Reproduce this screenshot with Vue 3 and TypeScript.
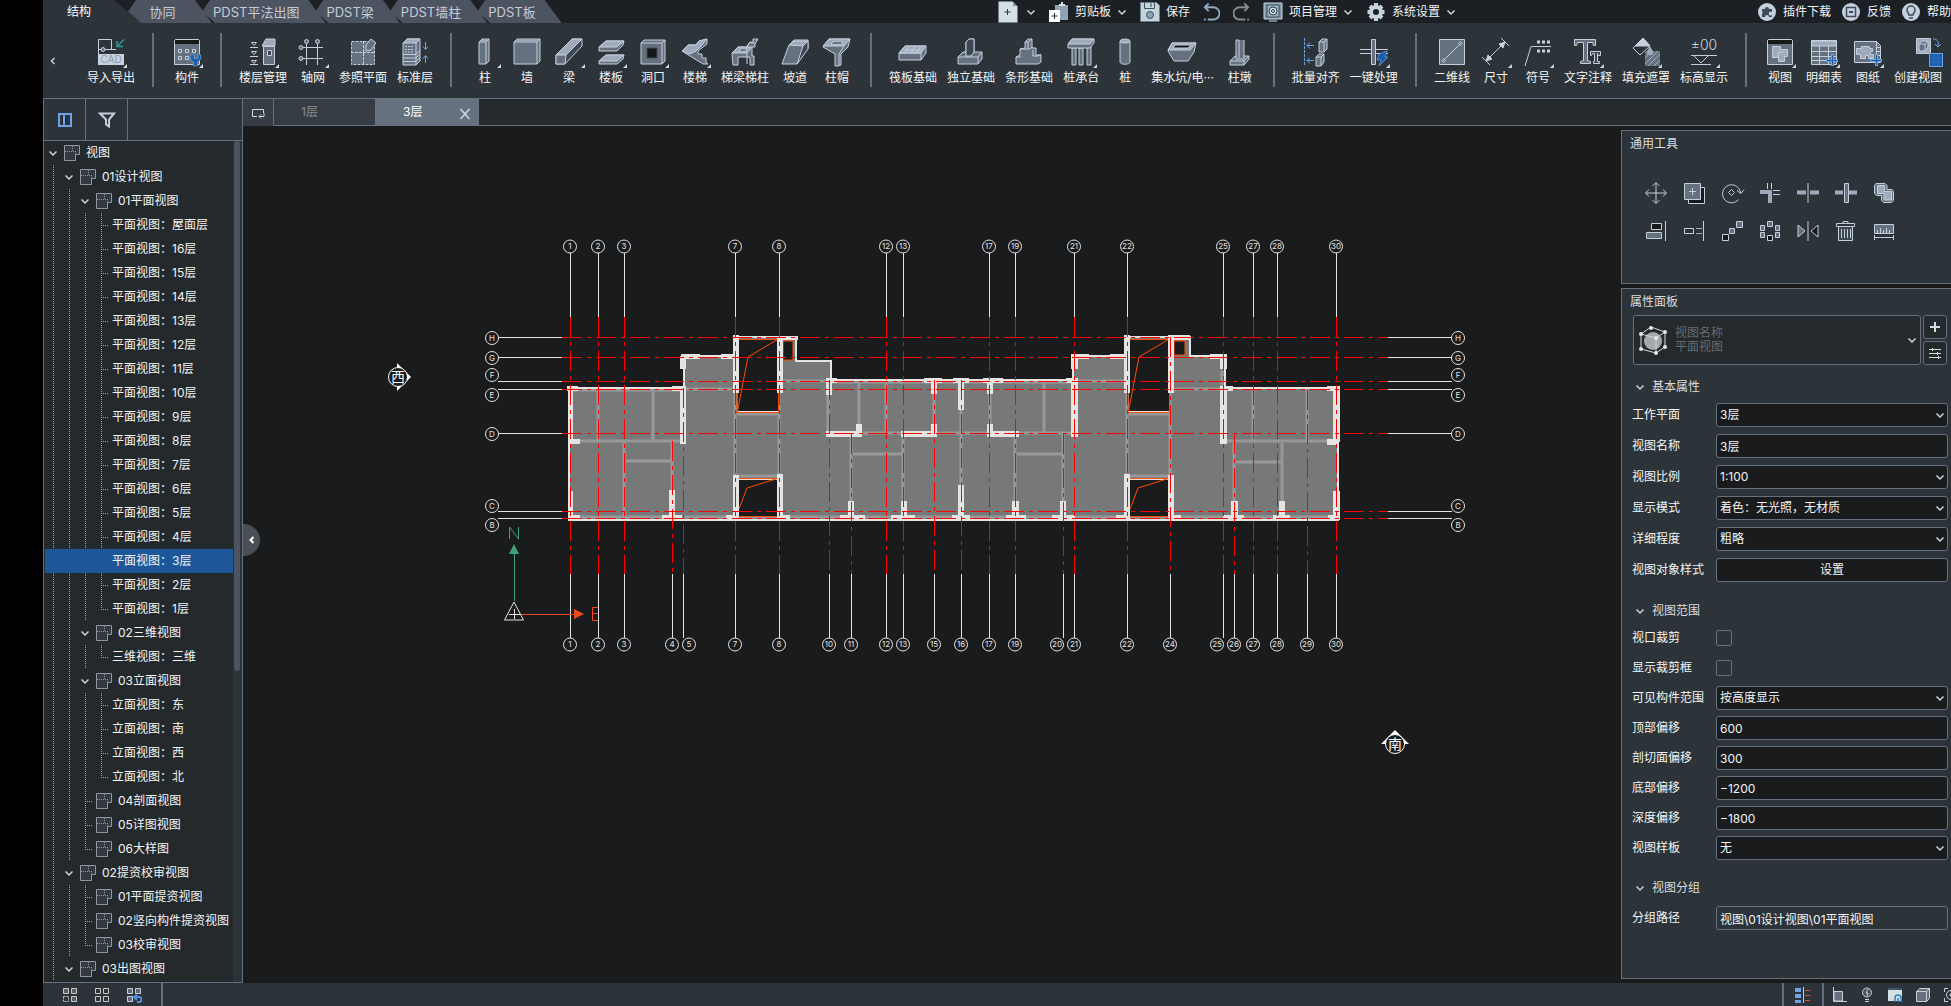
<script setup lang="ts">
import { reactive, ref } from 'vue'

const tabs = ['结构', '协同', 'PDST平法出图', 'PDST梁', 'PDST墙柱', 'PDST板']
const activeTab = ref(0)

/* Palette shared by the line icons */
const M = '#66717f'
const L = '#9fabbc'
const D = '#3d4753'
const K = '#16181a'
const B = '#1b5cab'
const A = '#6aa6e8'
const W = '#c8d2de'

interface Tool { label: string; icon: string; menu?: boolean }

const ribbon: Tool[][] = [
  [{ label: '导入导出', menu: true, icon: `<path d="M3.500 18V3.500H16.500V13M3 13.500H21"/><circle cx="8" cy="13.500" r="2" fill="${M}"/><path d="M29 3.500l-7 7M22 5v5.500h6" stroke="#2a9a9a" stroke-width="1.500"/><rect x="3" y="18" width="26" height="11" fill="${W}" stroke="none"/><text x="16" y="27" font-size="10" text-anchor="middle" fill="#8e99a8" stroke="none" font-family="Inter,sans-serif">CAD</text>` }],
  [{ label: '构件', menu: true, icon: `<path d="M3.500 28.500v-24l1-1h23l1 1v24z" fill="${M}"/><path d="M4 4h24v4H4z" fill="${K}" stroke="none"/><path d="M7.500 13.500h3v3h-3zM14.500 13.500h3v3h-3zM21.500 13.500h3v3h-3zM7.500 20.500h3v3h-3zM14.500 20.500h3v3h-3z"/><path d="M20 18l-1 3 1 3 2.500 2v4h4v-4l2.500-2 1-3-1-3-2 .5v4h-4v-4z" fill="${B}" stroke="${A}" stroke-width=".7"/>` }],
  [
    { label: '楼层管理', menu: true, icon: `<path d="M4.500 6.500h5l-2.500 3zM3 11.500h8M4.500 15.500h5l-2.500 3zM3 20.500h8M4.500 24.500h5l-2.500 3zM3 28.500h8"/><path d="M16.500 10.500h11v18h-11z" fill="${M}"/><path d="M15 10l4-7h9v7z" fill="${L}"/><path d="M20.500 14.500h4v5h-4z" fill="${D}"/>` },
    { label: '轴网', menu: true, icon: `<path d="M9.500 8v21M20.500 8v21M5 11.500h21M5 22.500h21"/><g fill="${M}"><circle cx="9.500" cy="5.500" r="2"/><circle cx="20.500" cy="5.500" r="2"/><circle cx="4" cy="11.500" r="2"/><circle cx="4" cy="22.500" r="2"/></g>` },
    { label: '参照平面', icon: `<path d="M5 6h22v22H5z" fill="${M}" stroke="none"/><path d="M4.500 5.500h23v23h-23zM4 16.500h24M16.500 5v24" stroke-dasharray="3 1"/><path d="M19 9l5-6 5 4-5 7-5 1z" fill="${M}"/>` },
    { label: '标准层', icon: `<path d="M4 7l4-4h13v22l-4 4H4z" fill="${M}"/><path d="M4 7h13l4-4H8z" fill="${L}"/><path d="M17 7v22M4 18.500h13l4-4M4 22h13l4-4M4 25.500h13l4-4"/><path d="M6 10.500h9M6 13.500h9M6 16h9" stroke-dasharray="2 1"/><path d="M26.500 6v7M24 10.500l2.500 3 2.500-3M26.500 27v-7M24 22.500l2.500-3 2.500 3" stroke="${A}"/>` },
  ],
  [
    { label: '柱', menu: true, icon: `<path d="M10 6l3-3h7v22l-3 3h-7z" fill="${M}"/><path d="M10 6h7l3-3M17 6v22"/><path d="M10.500 5.500h6l3-2.500h-6z" fill="${L}" stroke="none"/>` },
    { label: '墙', icon: `<path d="M3 6l3-3h23v22l-3 3H3z" fill="${M}"/><path d="M3 6h23l3-3M26 6v22"/><path d="M4 5.500h21l3-2H6z" fill="${L}" stroke="none"/>` },
    { label: '梁', menu: true, icon: `<path d="M3 19L19 3h10v7L12 28H3z" fill="${D}"/><path d="M3 19L19 3h10L13 19z" fill="${L}"/><path d="M3 19h10l-1 9H3z" fill="${M}"/>` },
    { label: '楼板', menu: true, icon: `<path d="M4 11l7-6h18l-1 4-6 6H4z" fill="${M}"/><path d="M4 11l7-6h18l-7 6z" fill="${L}"/><path d="M4 25l7-6h18l-1 4-6 5H4z" fill="${M}"/><path d="M4 25l7-6h18l-7 6z" fill="${L}"/>` },
    { label: '洞口', menu: true, icon: `<path d="M4 7l3-3h21v21l-3 3H4z" fill="${M}"/><path d="M4 7h21l3-3M25 7v21"/><path d="M10 12h10v10H10z" fill="${K}" stroke="#444b54"/>` },
    { label: '楼梯', menu: true, icon: `<path d="M3 15l6-6h8l3-4 8-2v5l-9 7v3h4v4h4v4l2 2h-5L11 20z" fill="${M}"/><path d="M3 15l6-6h8l3-4 8-2-5 6-6 6-6 3z" fill="${L}"/>` },
    { label: '梯梁梯柱', icon: `<path d="M3 17l6-6h9l3-5h3V3h5l-3 5v3h-3v9h2v9h-4v-8H9v8H4z" fill="${M}"/><path d="M3 17l6-6h14l-5 6z" fill="${L}"/><path d="M10 15l2-2h6l-2 2z" fill="${K}"/><path d="M18 17v11M21 6l-3 4M26 7h-4"/>` },
    { label: '坡道', icon: `<path d="M3 28L10 9l5-5h14v8L18 28z" fill="${M}"/><path d="M10 9l5-4h14l-5 5z" fill="${L}"/><path d="M24 10l5-5v8L18 28z" fill="${D}"/>` },
    { label: '柱帽', icon: `<path d="M2 11l6-8h21l-2 8-7 7v11l-3 1h-3V18z" fill="${M}"/><path d="M2 10l6-7h21l-6 7z" fill="${L}"/><path d="M10 8l2-2h10l-2 2z" fill="${K}"/><path d="M18 18V29M23 10l-5 8"/>` },
  ],
  [
    { label: '筏板基础', icon: `<path d="M2 17l6-7h21v7l-5 7H2z" fill="${M}"/><path d="M2 17l6-7h21l-5 7z" fill="${L}"/><path d="M2 17h22v7M6 14h20M12 10l-4 7M18 10l-4 7M24 10l-4 7"/>` },
    { label: '独立基础', icon: `<path d="M3 21l5-5h3V6l3-3h5v13h8v7l-4 5H3z" fill="${M}"/><path d="M11 6l3-3h5v13l-3 4h-5z" fill="${D}"/><path d="M3 21h20l4-5M23 21v7"/>` },
    { label: '条形基础', icon: `<path d="M3 28v-7l4-2v-6l5-1V6l3-3h4v9h4v7h5v7l-3 2z" fill="${M}"/><path d="M12 6h3l4-3M15 6v6M7 13h9l4-2M20 14v6h5l3-2M3 21h5"/>` },
    { label: '桩承台', menu: true, icon: `<path d="M7 12h4v17H7zM14 12h4v17h-4zM22 10h4v19h-4z" fill="${M}"/><path d="M3 8l4-5h22v4l-4 5H3z" fill="${M}"/><path d="M3 8l4-5h22l-4 5z" fill="${L}"/>` },
    { label: '桩', icon: `<path d="M11 5v21c0 3 10 3 10 0V5" fill="${M}"/><ellipse cx="16" cy="5" rx="5" ry="2" fill="${L}"/>` },
    { label: '集水坑/电···', icon: `<path d="M2 15l4-8h24l-2 9-6 9H8z" fill="${M}"/><path d="M2 14l4-7h24l-6 7z" fill="${L}"/><path d="M7 12l2-3h16l-3 3z" fill="${K}"/>` },
    { label: '柱墩', icon: `<path d="M6 25l5-5h14v3l-5 6H6z" fill="${M}"/><path d="M12 4v19h8V4" fill="${M}"/><path d="M12 4h3v18M6 25h14l5-5M20 25v4"/>` },
  ],
  [
    { label: '批量对齐', icon: `<path d="M4.500 2v28" stroke="${A}" stroke-dasharray="3 1"/><path d="M14 9.500H7l3-3M7 9.500l3 3M14 24.500H7l3-3M7 24.500l3 3" stroke="${A}"/><path d="M19 6l3-3h5v10l-3 3h-5zM16 21l3-3h5v8l-3 4h-5z" fill="${M}"/><path d="M19 6h5l3-3M24 6v9M16 21h5l3-3M21 21v8"/>` },
    { label: '一键处理', menu: true, icon: `<path d="M2 13.500h28M2 17.500h28"/><path d="M13.500 3.500h4v25h-4z" fill="${M}"/><path d="M21 18l8-3-2 6h3l-9 9 2-6h-4z" fill="${B}" stroke="${A}" stroke-width=".7"/>` },
  ],
  [
    { label: '二维线', icon: `<path d="M3.500 3.500h25v25h-25z" fill="${M}"/><path d="M8 24L24 8"/><circle cx="7.500" cy="24.500" r="1.500"/><circle cx="24.500" cy="7.500" r="1.500"/>` },
    { label: '尺寸', menu: true, icon: `<path d="M6 25L25 6M2 21l8 8M21 2l8 8"/><path d="M6 25l2-6 4 4zM25 6l-6 2 4 4z" fill="${W}"/>` },
    { label: '符号', menu: true, icon: `<path d="M3 30L9 10.500h20"/><path d="M15 6h3M20 6h3M25 6h3M15 15h3M20 15h3M25 15h3" stroke-width="3"/>` },
    { label: '文字注释', menu: true, icon: `<path d="M2.500 3.500h21v6h-2l-1-3h-5v18l3 1v2h-10v-2l3-1v-18h-6l-1 3h-2z" fill="${M}"/><path d="M18.500 15.500h10v4h-2l-1-2v8h2v2h-6v-2h1v-8h-2l-1 2h-1z" fill="${D}"/>` },
    { label: '填充遮罩', menu: true, icon: `<path d="M15 15h15v15H15z" fill="${M}" stroke="none"/><path d="M15 22l7-7M15 28l13-13M18 30l12-12M24 30l6-6" stroke="${L}"/><path d="M3 12l10-10 7 8-10 9z"/><path d="M5 10l8-8 7 8z" fill="${W}"/><path d="M20 11l3 5a3 3 0 1 1-6 0z" fill="${L}" stroke="${L}"/>` },
    { label: '标高显示', menu: true, icon: `<text x="16" y="14" font-size="14" text-anchor="middle" fill="${W}" stroke="none" font-family="Inter,sans-serif" font-weight="300">±00</text><path d="M3 19.500h26M3 28.500h20M6 20l7 7 7-7"/>` },
  ],
  [
    { label: '视图', menu: true, icon: `<path d="M3.500 28.500v-24l1-1h23l1 1v24z" fill="${M}"/><path d="M4 4h24v4H4z" fill="${K}" stroke="none"/><path d="M8.500 10.500h8v3h7v7h-3v5h-6v-4h-6z" fill="${L}"/><path d="M14.500 21v-5h6"/>` },
    { label: '明细表', menu: true, icon: `<path d="M3.500 4.500h25v24h-25z" fill="${M}"/><path d="M4 5h24v5H4z" fill="${L}"/><path d="M3 15.500h26M3 20.500h26M3 24.500h18M11.500 10v18M20.500 10v18"/><path d="M18 24.500h12M24.500 18v12" stroke="${A}" stroke-width="3"/><path d="M19 24.500h10M24.500 19v10" stroke="${B}"/>` },
    { label: '图纸', menu: true, icon: `<path d="M2.500 5.500h22l4 4v17h-26z" fill="${M}"/><path d="M4.500 12.500h5v-2h8v2h3v3h-2v3h3v4h-5v-3h-3v3h-5v-4h-4z" fill="${L}"/><path d="M24.500 5v20M25 11.500h3M25 15.500h3M25 19.500h3"/><path d="M18 24.500h12M24.500 18v12" stroke="${A}" stroke-width="3"/><path d="M19 24.500h10M24.500 19v10" stroke="${B}"/>` },
    { label: '创建视图', icon: `<path d="M14.500 2.500h14v15h-14z" fill="${L}"/><path d="M17 8l3-3h6v6l-3 4h-6z" fill="${M}"/><path d="M17 8h6l3-3M23 8v7"/><path d="M27.500 17.500h13v13h-13z" fill="${B}" stroke="${A}"/><path d="M28 22h12M28 26h12M32 18v12M36 18v12" stroke="#2f72c4"/><path d="M31 3c4 0 6 2 5 7M33 8l3 3 3-3" stroke="${A}"/>` },
  ],
]

interface Row { d: number; t: string; open?: boolean; leaf?: boolean; end?: boolean; sel?: boolean }
const floors = ['屋面层', '16层', '15层', '14层', '13层', '12层', '11层', '10层', '9层', '8层', '7层', '6层', '5层', '4层', '3层', '2层', '1层']
const rows: Row[] = [
  { d: 0, t: '视图', open: true },
  { d: 1, t: '01设计视图', open: true },
  { d: 2, t: '01平面视图', open: true },
  ...floors.map((f) => ({ d: 3, t: '平面视图：' + f, leaf: true, end: f === '1层', sel: f === '3层' })),
  { d: 2, t: '02三维视图', open: true },
  { d: 3, t: '三维视图：三维', leaf: true, end: true },
  { d: 2, t: '03立面视图', open: true },
  ...['东', '南', '西', '北'].map((f) => ({ d: 3, t: '立面视图：' + f, leaf: true, end: f === '北' })),
  { d: 2, t: '04剖面视图' },
  { d: 2, t: '05详图视图' },
  { d: 2, t: '06大样图', end: true },
  { d: 1, t: '02提资校审视图', open: true },
  { d: 2, t: '01平面提资视图' },
  { d: 2, t: '02竖向构件提资视图' },
  { d: 2, t: '03校审视图', end: true },
  { d: 1, t: '03出图视图', open: true },
]

const tools: { name: string; icon: string }[] = [
  { name: '移动', icon: `<path d="M12 2v20M2 12h20M8.500 5L12 1.500 15.500 5M8.500 19l3.500 3.500 3.500-3.500M5 8.500L1.500 12 5 15.500M19 8.500l3.500 3.500-3.500 3.500"/>` },
  { name: '复制', icon: `<path d="M6.500 6.500h16v16h-16z" fill="${K}"/><path d="M2.500 2.500h16v16h-16z" fill="${M}"/><path d="M10.500 7v7M7 10.500h7"/>` },
  { name: '旋转', icon: `<path d="M18.500 18.500A9 9 0 1 1 20.500 12M17 9.500l4 3 3-4"/><path d="M11.500 8.500l3 3-3 3-3-3z"/>` },
  { name: '修剪', icon: `<path d="M2 9h12v13H10v-9H2z" fill="${L}" stroke="none"/><path d="M9.500 2v6M13.500 2v6M15 9.500h7M15 13.500h7"/>` },
  { name: '打断', icon: `<path d="M1 9.500h9v4H1zM14 9.500h9v4h-9z" fill="${L}" stroke="none"/><path d="M12 2v20"/>` },
  { name: '连接', icon: `<path d="M1 9.500h8v4H1zM15 9.500h8v4h-8z" fill="${L}" stroke="none"/><path d="M10.500 2.500h4v19h-4z" fill="${M}"/>` },
  { name: '合并', icon: `<path d="M4 2.500h9l2 2v4h5l1.500 2v9l-2 2h-8l-2-2v-5h-5l-2-2v-8z" fill="${M}"/><path d="M5.500 4.500h7v6h7v8.500h-7.500v-6.500h-6.500z" fill="${L}"/>` },
  { name: '对齐', icon: `<path d="M7.500 4.500h10v6h-10z" fill="${K}"/><path d="M2.500 13.500h15v6h-15z" fill="${M}"/><path d="M21.500 2v20"/>` },
  { name: '延伸', icon: `<path d="M2.500 9.500h9v5h-9z"/><path d="M14 9.500h6M14 14.500h6" stroke="${L}"/><path d="M21.500 2v20"/>` },
  { name: '阵列', icon: `<path d="M16.500 2.500h6v6h-6zM9.500 9.500h5v5h-5z" fill="${M}"/><path d="M2.500 15.500h6v6h-6z" fill="${K}"/>` },
  { name: '环形阵列', icon: `<path d="M9.500 2.500h5v5h-5zM2.500 6.500h4v5h-4zM17.500 6.500h4v5h-4zM2.500 13.500h4v5h-4zM17.500 13.500h4v5h-4z" fill="${M}"/><path d="M9.500 16.500h5v5h-5z" fill="${K}"/>` },
  { name: '镜像', icon: `<path d="M2 6v12l7-6z" fill="${M}"/><path d="M22 6v12l-7-6z" fill="${K}"/><path d="M12 2v20"/>` },
  { name: '删除', icon: `<path d="M4.500 7v14.500h14V7" fill="${D}"/><path d="M2.500 4.500h18v3h-18zM9 4V2.500h5V4M7.500 10v9M10.500 10v9M13.500 10v9M16.500 10v9"/>` },
  { name: '测量', icon: `<path d="M2.500 5.500h19v9h-19z" fill="${M}"/><path d="M5.500 14v-3M8.500 14V9M11.500 14v-3M14.500 14V9M17.500 14v-3M2 18.500h20M2.500 16v5M21.500 16v5"/>` },
]

type Kind = 'select' | 'text' | 'button' | 'check' | 'path'
interface Field { id: string; label: string; kind: Kind; value: string }
const sections = reactive<{ title: string; cls: string; fields: Field[] }[]>([
  {
    title: '基本属性', cls: 'basic', fields: [
      { id: 'plane', label: '工作平面', kind: 'select', value: '3层' },
      { id: 'name', label: '视图名称', kind: 'text', value: '3层' },
      { id: 'scale', label: '视图比例', kind: 'select', value: '1:100' },
      { id: 'mode', label: '显示模式', kind: 'select', value: '着色：无光照，无材质' },
      { id: 'detail', label: '详细程度', kind: 'select', value: '粗略' },
      { id: 'style', label: '视图对象样式', kind: 'button', value: '设置' },
    ],
  },
  {
    title: '视图范围', cls: 'range', fields: [
      { id: 'crop', label: '视口裁剪', kind: 'check', value: '' },
      { id: 'frame', label: '显示裁剪框', kind: 'check', value: '' },
      { id: 'visible', label: '可见构件范围', kind: 'select', value: '按高度显示' },
      { id: 'top', label: '顶部偏移', kind: 'text', value: '600' },
      { id: 'cut', label: '剖切面偏移', kind: 'text', value: '300' },
      { id: 'bottom', label: '底部偏移', kind: 'text', value: '−1200' },
      { id: 'depth', label: '深度偏移', kind: 'text', value: '−1800' },
      { id: 'template', label: '视图样板', kind: 'select', value: '无' },
    ],
  },
  { title: '视图分组', cls: 'group', fields: [{ id: 'path', label: '分组路径', kind: 'path', value: '视图\\01设计视图\\01平面视图' }] },
])

/* Grid axes: [line x, label, bubble x, top of the red part]; full-height axes start at 317 */
const axesX: [number, string, number, number][] = [
  [570, '1', 570, 317], [598, '2', 598, 317], [624, '3', 624, 317], [672, '4', 672, 441], [683, '5', 689, 388],
  [735, '7', 735, 317], [779, '8', 779, 317], [829, '10', 829, 380], [851, '11', 851, 434], [886, '12', 886, 317],
  [903, '13', 903, 317], [934, '15', 934, 380], [961, '16', 961, 380], [989, '17', 989, 317], [1015, '19', 1015, 317],
  [1063, '20', 1057, 434], [1074, '21', 1074, 317], [1127, '22', 1127, 317], [1170, '24', 1170, 337], [1223, '25', 1217, 317],
  [1234, '26', 1234, 434], [1253, '27', 1253, 317], [1277, '28', 1277, 317], [1307, '29', 1307, 390], [1336, '30', 1336, 317],
]
const topAxes = axesX.filter((a) => a[3] === 317)
const axesY: [number, string, number][] = [
  [337, 'H', 338], [357, 'G', 358], [381, 'F', 375], [389, 'E', 395], [433, 'D', 434], [511, 'C', 506], [518, 'B', 525],
]

const outline = 'M569 388H684V356H735V337H796V361H831V380H1073V356H1127V337H1190V356H1225V388H1338V520H569Z'
const partitions =
  'M598 389V441M653 389V441M578 441H681M624 443V518M672 443V491M626 461H671M684 389H734M735 393V475M779 393V475M737 414H778M737 476H778' +
  'M783 381H827M828 383V431M859 383V425M886 383V432M862 433H901M937 433H987M1019 433H1071M934 394V425M961 410V485M990 394V424M1044 383V432' +
  'M851 437V501M903 437V501M853 454H902M1015 437V501M1017 454H1062M1063 434V501M1078 381H1126M1127 393V475M1170 393V475M1129 414H1169M1129 476H1169' +
  'M1173 389H1221M1222 370V386M1253 389V440M1307 389V440M1226 441H1327M1234 443V501M1282 443V501M1236 462H1281M571 517H1337M571 390H683M832 382H1071'
const walls: number[][] = [
  [567, 386, 11, 5], [568, 387, 5, 55], [568, 439, 12, 5], [568, 491, 5, 29], [568, 515, 12, 5], [669, 490, 6, 29], [662, 515, 20, 5],
  [672, 386, 14, 5], [680, 387, 6, 57], [681, 354, 19, 5], [721, 354, 16, 5], [680, 356, 6, 13], [733, 335, 6, 58], [777, 337, 6, 56],
  [780, 336, 18, 4], [733, 475, 6, 43], [726, 515, 13, 5], [777, 474, 6, 45], [777, 515, 13, 5],
  [826, 378, 6, 17], [826, 378, 11, 5], [826, 431, 35, 6], [856, 424, 6, 13], [924, 378, 18, 5], [931, 378, 6, 16], [953, 378, 16, 5],
  [958, 378, 6, 32], [983, 378, 20, 5], [987, 378, 6, 16], [901, 431, 36, 6], [931, 424, 6, 13], [987, 424, 6, 13], [987, 431, 32, 6],
  [1066, 378, 12, 5], [1071, 379, 7, 58], [1071, 354, 7, 15], [1072, 354, 17, 5], [1110, 354, 17, 5], [1124, 335, 6, 58],
  [848, 501, 6, 18], [840, 515, 25, 5], [901, 501, 6, 18], [891, 515, 24, 5], [958, 485, 6, 34], [952, 515, 18, 5], [1012, 501, 7, 18],
  [1006, 515, 20, 5], [1060, 501, 6, 18], [1052, 515, 23, 5], [1116, 515, 14, 5], [1124, 474, 6, 45], [1168, 337, 6, 56], [1168, 335, 22, 5],
  [1168, 475, 6, 44], [1168, 515, 13, 5], [1210, 354, 16, 5], [1220, 354, 7, 15], [1220, 387, 7, 57], [1220, 386, 13, 5], [1327, 386, 13, 5],
  [1333, 386, 7, 56], [1327, 439, 12, 6], [1333, 491, 7, 29], [1328, 515, 12, 5], [1231, 501, 7, 18], [1223, 515, 21, 5], [1279, 501, 6, 18],
  [1273, 515, 17, 5],
]
</script>

<template>
  <div class="app">
    <header class="topbar">
      <nav class="tabs">
        <button v-for="(t, i) in tabs" :key="t" class="tab" :class="{ first: i === 0, on: i === activeTab }" @click="activeTab = i">{{ t }}</button>
      </nav>
      <div class="space-a"></div>
      <div class="quick">
        <button class="q new" aria-label="新建">
          <svg width="20" height="22" viewBox="0 0 20 22"><path d="M.5.500h14l5 5v16h-19z" fill="#d3e0e4" /><path d="M15 1v4h4z" fill="#7f95a0" /><path d="M9.500 8v6M6.500 11h6" stroke="#1e3a48" /></svg>
          <svg class="chev" viewBox="0 0 10 10"><path d="M1.500 3.500l3.500 3.500 3.500-3.500" /></svg>
        </button>
        <button class="q">
          <svg width="20" height="22" viewBox="0 0 20 22"><path d="M6 4h13v15H6z" fill="#8ea3b5" /><path d="M10 5V3h2V1h2v2h2v2z" fill="#d3e0e4" /><path d="M0 9h11v12H0z" fill="#fff" /><path d="M5.500 12v6M2.500 15h6" stroke="#1e3a48" /></svg>
          <span>剪贴板</span>
          <svg class="chev" viewBox="0 0 10 10"><path d="M1.500 3.500l3.500 3.500 3.500-3.500" /></svg>
        </button>
        <button class="q">
          <svg width="20" height="22" viewBox="0 0 20 22"><path d="M.5 1.500h16l3 3v16H.5z" fill="#c5d3dc" stroke="#6c8190" /><path d="M4.500 1.500v6h10v-6M11 2v4" fill="none" stroke="#3d5260" /><circle cx="10" cy="14" r="3.500" fill="#8ea3b5" stroke="#3d5260" /></svg>
          <span>保存</span>
        </button>
        <button class="q" aria-label="撤销"><svg width="17" height="20" viewBox="0 0 18 20"><path d="M2 5h9a6 6 0 0 1 0 13H5M6 1L2 5l4 4" fill="none" stroke="#8fa9c0" stroke-width="2" /><path d="M1 18h2" stroke="#8fa9c0" stroke-width="2" /></svg></button>
        <button class="q" aria-label="重做"><svg width="17" height="20" viewBox="0 0 18 20"><path d="M16 5H7a6 6 0 0 0 0 13h6M12 1l4 4-4 4" fill="none" stroke="#858b91" stroke-width="2" /><path d="M15 18h2" stroke="#858b91" stroke-width="2" /></svg></button>
        <button class="q">
          <svg width="20" height="22" viewBox="0 0 20 22"><path d="M1 2h18v16H1z" fill="#7c94a6" stroke="#c5d3dc" /><path d="M6 20h8" stroke="#6c8190" stroke-width="2" /><path d="M4 4h12v12H4z" fill="#9db0bf" stroke="#3d5260" /><circle cx="10" cy="10" r="4" fill="#d3e0e4" stroke="#2b4352" /><circle cx="10" cy="10" r="1.500" fill="none" stroke="#2b4352" /></svg>
          <span>项目管理</span>
          <svg class="chev" viewBox="0 0 10 10"><path d="M1.500 3.500l3.500 3.500 3.500-3.500" /></svg>
        </button>
        <button class="q">
          <svg width="20" height="22" viewBox="0 0 20 22"><circle cx="10" cy="11" r="5" fill="none" stroke="#c5d3dc" stroke-width="4" /><path d="M10 2v3M10 17v3M1.500 11h3M15.500 11h3M4 5l2 2M14 15l2 2M16 5l-2 2M6 15l-2 2" stroke="#c5d3dc" stroke-width="4" /></svg>
          <span>系统设置</span>
          <svg class="chev" viewBox="0 0 10 10"><path d="M1.500 3.500l3.500 3.500 3.500-3.500" /></svg>
        </button>
      </div>
      <div class="space-b"></div>
      <div class="help">
        <a class="h" href="#"><svg width="18" height="18" viewBox="0 0 18 18"><circle cx="9" cy="9" r="9" fill="#c5cfdd" /><path d="M4 6h3a2 2 0 1 1 4 0h3v3a2 2 0 1 0 0 3v2h-3a2 2 0 0 0-4 0H4v-3a2 2 0 0 0 0-3z" fill="#3f4b58" /></svg>插件下载</a>
        <a class="h" href="#"><svg width="18" height="18" viewBox="0 0 18 18"><circle cx="9" cy="9" r="9" fill="#c5cfdd" /><path d="M4.500 4.500h9v9h-9z" fill="none" stroke="#3f4b58" stroke-width="1.500" /><path d="M7 8h4v2H7z" fill="#3f4b58" /></svg>反馈</a>
        <a class="h" href="#"><svg width="18" height="18" viewBox="0 0 18 18"><circle cx="9" cy="9" r="9" fill="#c5cfdd" /><path d="M7 12c0-2-2-2-2-5a4 4 0 0 1 8 0c0 3-2 3-2 5zM7 15h4" fill="none" stroke="#3f4b58" stroke-width="1.500" /></svg>帮助</a>
      </div>
    </header>

    <div class="ribbon">
      <button class="back" aria-label="向左"><svg width="10" height="10" viewBox="0 0 10 10"><path d="M6.500 2l-3 3 3 3" fill="none" stroke="#c5cdd6" stroke-width="1.500" /></svg></button>
      <div v-for="(g, gi) in ribbon" :key="gi" class="rgroup">
        <button v-for="t in g" :key="t.label" class="rbtn">
          <span class="ricon">
            <svg width="32" height="32" viewBox="0 0 32 32" v-html="t.icon"></svg>
            <i v-if="t.menu" class="corner"></i>
          </span>
          <span class="rlabel">{{ t.label }}</span>
        </button>
      </div>
    </div>

    <div class="body">
      <aside class="left">
        <div class="ltools">
          <button class="lt" aria-label="面板"><svg width="16" height="16" viewBox="0 0 16 16"><path d="M2 2h12v12H2zM7 2v12" fill="none" stroke="#6fa5e6" stroke-width="2" /></svg></button>
          <button class="lt" aria-label="筛选"><svg width="18" height="16" viewBox="0 0 18 16"><path d="M2 1.500h14l-5 6v7l-3-2v-5z" fill="none" stroke="#c5cfdd" stroke-width="2" /></svg></button>
        </div>
        <div class="treebox">
          <ul class="tree">
            <li v-for="(r, i) in rows" :key="i" class="row" :class="{ sel: r.sel }">
              <span v-for="k in r.d" :key="k" class="guide full"></span>
              <span v-if="r.open" class="guide"><svg class="chev" viewBox="0 0 10 10"><path d="M1.500 3.500l3.500 3.500 3.500-3.500" /></svg></span>
              <span v-else class="guide branch" :class="{ end: r.end }"></span>
              <svg v-if="!r.leaf" class="vicon" viewBox="0 0 16 16"><path d="M.5.500h15v9h-4v6H.5z" fill="#333a41" stroke="#8d96a3" /><path d="M1 6.500h10M8.500 1v5M11.500 6v3" fill="none" stroke="#8d96a3" stroke-dasharray="1 1" /></svg>
              <span class="rt">{{ r.t }}</span>
            </li>
          </ul>
          <div class="track"><div class="thumb"></div></div>
        </div>
      </aside>

      <main class="work">
        <div class="docs">
          <button class="switch" aria-label="切换窗口"><svg width="14" height="12" viewBox="0 0 14 12"><path d="M6 9.500H1.500v-7h11V6M13 6v3.500H8.500M10 7.500l-2 2 2 2" fill="none" stroke="#d5dae0" /></svg></button>
          <div class="doc">1层</div>
          <div class="doc on">3层<button class="close" aria-label="关闭"><svg width="12" height="12" viewBox="0 0 12 12"><path d="M1.500 1l9 10M10.500 1l-9 10" stroke="#d5dae0" stroke-width="1.500" /></svg></button></div>
          <div class="rest"></div>
        </div>
        <div class="stage">
          <section class="canvas">
            <svg class="plan" viewBox="243 126 1378 857" preserveAspectRatio="xMinYMin meet">
              <path :d="outline" fill="#777978" stroke="none" />
              <path :d="partitions" fill="none" stroke="#96989a" stroke-width="3" />
              <path :d="outline" fill="none" stroke="#e6e4e2" stroke-width="2" />
              <g v-for="dx in [0, 391]" :key="dx" :transform="`translate(${dx} 0)`">
                <path d="M738 339h40v73h-40zM738 479h40v38h-40z" fill="#1a1b1d" />
                <path :d="dx ? 'M783 341h11v14h-11z' : 'M783 341h10v19h-10z'" fill="#1a1b1d" stroke="#ff4d00" />
                <path d="M738 411.500h40M738 479.500h40" stroke="#e6e4e2" />
                <path d="M738.500 339.500h39L748 357l-10.500 54M736 412.500h42.500V393M737 393v19M738 478.500h39.500L747 488l-8 21M738 516.500h40" fill="none" stroke="#ff4d00" />
              </g>
              <rect v-for="(w, i) in walls" :key="i" :x="w[0]" :y="w[1]" :width="w[2]" :height="w[3]" fill="#e6e4e2" />
              <g stroke="#ff0000" stroke-dasharray="20 5 4 5">
                <line v-for="a in axesX" :key="a[1]" :x1="a[0] + 0.5" :x2="a[0] + 0.5" :y1="a[3]" y2="574" />
                <line v-for="a in axesY" :key="a[1]" x1="562" x2="1388" :y1="a[0] + 0.5" :y2="a[0] + 0.5" />
              </g>
              <g stroke="#e6e4e2">
                <line v-for="a in topAxes" :key="a[1]" :x1="a[0] + 0.5" :x2="a[0] + 0.5" y1="253" y2="317" />
                <line v-for="a in axesX" :key="a[1]" :x1="a[0] + 0.5" :x2="a[0] + 0.5" y1="574" y2="638" />
                <template v-for="a in axesY" :key="a[1]">
                  <line x1="498" x2="562" :y1="a[0] + 0.5" :y2="a[0] + 0.5" />
                  <line x1="1388" x2="1452" :y1="a[0] + 0.5" :y2="a[0] + 0.5" />
                </template>
              </g>
              <g class="bubbles">
                <g v-for="a in topAxes" :key="a[1]"><circle :cx="a[0]" cy="246.500" r="6.500" /><text :x="a[0]" y="249">{{ a[1] }}</text></g>
                <g v-for="a in axesX" :key="a[1]"><circle :cx="a[2]" cy="644.500" r="6.500" /><text :x="a[2]" y="647">{{ a[1] }}</text></g>
                <g v-for="a in axesY" :key="a[1]">
                  <circle cx="492" :cy="a[2]" r="6.500" /><text x="492" :y="a[2] + 3">{{ a[1] }}</text>
                  <circle cx="1458" :cy="a[2]" r="6.500" /><text x="1458" :y="a[2] + 3">{{ a[1] }}</text>
                </g>
              </g>
              <g fill="none">
                <path d="M514.500 554v47" stroke="#3fa37a" /><path d="M509 554h10l-5-10z" fill="#3fa37a" />
                <path d="M514 602l-9.500 18h19zM514.500 609v10M509 614.500h11" stroke="#e6e4e2" />
                <path d="M521 614.500h53" stroke="#f04a20" /><path d="M574 609v10l10-5z" fill="#f04a20" />
                <path d="M509.500 539v-12l9 12v-12" stroke="#3fa37a" />
                <path d="M598 607.500h-5.500v13h5.500M593 613.500h5" stroke="#f04a20" />
              </g>
              <g class="mark">
                <path d="M397 363l14 14-14 14z" /><circle cx="398" cy="377" r="9.500" /><text x="398" y="382">西</text>
                <path d="M1381 744l14-14 14 14z" /><circle cx="1395" cy="744" r="9.500" /><text x="1395" y="749">南</text>
              </g>
            </svg>
            <button class="handle" aria-label="收起"><svg width="10" height="12" viewBox="0 0 10 12"><path d="M6.500 3l-3 3 3 3" fill="none" stroke="#fff" stroke-width="2" /></svg></button>
          </section>

          <aside class="right">
            <section class="panel">
              <h2>通用工具</h2>
              <div class="tools">
                <button v-for="t in tools" :key="t.name" :aria-label="t.name"><svg width="24" height="24" viewBox="0 0 24 24" v-html="t.icon"></svg></button>
              </div>
            </section>
            <section class="panel props">
              <h2>属性面板</h2>
              <div class="type">
                <button class="typebox">
                  <svg width="28" height="30" viewBox="0 0 28 30"><circle cx="14" cy="16" r="9" fill="#a6a8aa" /><path d="M12 2l14 5v15l-9 6-15-4V9zM2 9l15 4 9-6M17 13v15" fill="none" stroke="#d5d8dc" /><g fill="#e3e5e7"><circle cx="12" cy="3" r="2" /><circle cx="26" cy="7" r="2" /><circle cx="26" cy="22" r="2" /><circle cx="17" cy="28" r="2" /><circle cx="2" cy="24" r="2" /><circle cx="2" cy="9" r="2" /><circle cx="17" cy="13" r="2" /></g></svg>
                  <span class="typetext">视图名称<br />平面视图</span>
                  <svg class="chev" viewBox="0 0 10 10"><path d="M1.500 3.500l3.500 3.500 3.500-3.500" /></svg>
                </button>
                <div class="typebtns">
                  <button aria-label="新建类型"><svg width="12" height="12" viewBox="0 0 12 12"><path d="M6 1v10M1 6h10" stroke="#d5dae0" stroke-width="2" /></svg></button>
                  <button aria-label="编辑类型"><svg width="12" height="12" viewBox="0 0 12 12"><path d="M0 2.500h12M0 6.500h12M0 10.500h12M3.500 1v3M8.500 5v3M9.500 9v3" stroke="#d5dae0" /></svg></button>
                </div>
              </div>
              <div v-for="s in sections" :key="s.title" class="sec" :class="s.cls">
                <h3><svg class="chev" viewBox="0 0 10 10"><path d="M1.500 3.500l3.500 3.500 3.500-3.500" /></svg>{{ s.title }}</h3>
                <div v-for="f in s.fields" :key="f.id" class="field">
                  <label :for="f.id">{{ f.label }}</label>
                  <span v-if="f.kind === 'select'" class="sel-wrap">
                    <select :id="f.id" v-model="f.value"><option>{{ f.value }}</option></select>
                    <svg class="chev" viewBox="0 0 10 10"><path d="M1.500 3.500l3.500 3.500 3.500-3.500" /></svg>
                  </span>
                  <button v-else-if="f.kind === 'button'" :id="f.id" class="box">{{ f.value }}</button>
                  <input v-else-if="f.kind === 'check'" :id="f.id" type="checkbox" />
                  <input v-else :id="f.id" v-model="f.value" type="text" class="box" :class="{ plain: f.kind === 'path' }" :readonly="f.kind === 'path'" />
                </div>
              </div>
            </section>
          </aside>
        </div>
      </main>
    </div>

    <footer class="status">
      <div class="sgroup a">
        <button aria-label="框选"><svg width="16" height="16" viewBox="0 0 16 16"><path d="M1.500 1.500h5v5h-5zM9.500 1.500h5v5h-5zM9.500 9.500h5v5h-5z" fill="#5a5f64" stroke="#c9c9c9" /><path d="M1.500 9.500h5v5h-5z" fill="none" stroke="#c9c9c9" stroke-dasharray="2 1" /></svg></button>
        <button aria-label="全选"><svg width="16" height="16" viewBox="0 0 16 16"><path d="M1.500 1.500h5v5h-5zM9.500 1.500h5v5h-5zM1.500 9.500h5v5h-5zM9.500 9.500h5v5h-5z" fill="none" stroke="#c9c9c9" /></svg></button>
        <button aria-label="恢复选择"><svg width="16" height="16" viewBox="0 0 16 16"><path d="M1.500 1.500h5v5h-5zM9.500 1.500h5v5h-5zM1.500 9.500h5v5h-5z" fill="#5f6b7a" stroke="#c9d0da" /><path d="M9 10h4a2 2 0 0 1 0 5h-2M11 8l-3 2 3 3" fill="none" stroke="#4f90e0" stroke-width="2" /></svg></button>
      </div>
      <div class="sgroup b">
        <button aria-label="列表"><svg width="16" height="16" viewBox="0 0 16 16"><path d="M0 1h6v4H0zM0 7h6v4H0zM0 13h6v3H0z" fill="#6fa5e6" /><path d="M8.500 0v16" stroke="#c9d0da" /><path d="M10 3.500h5M10 8.500h5M10 13.500h5" stroke="#e8502a" /></svg></button>
      </div>
      <div class="sgroup c">
        <button aria-label="坐标"><svg width="16" height="16" viewBox="0 0 16 16"><path d="M2.500 0v14.500H16" fill="none" stroke="#c9d0da" /><path d="M3 4.500h8.500V14H3z" fill="#66717f" stroke="#c9d0da" /></svg></button>
        <button aria-label="提示"><svg width="16" height="16" viewBox="0 0 16 16"><circle cx="8" cy="5.500" r="4.500" fill="#4a525a" stroke="#c9d0da" /><path d="M9 2L7 6h2L8 9M6 12.500h4M6 14.500h4" fill="none" stroke="#c9d0da" /></svg></button>
        <button aria-label="窗口"><svg width="16" height="16" viewBox="0 0 16 16"><path d="M1 1h14v13H1z" fill="#d3e0e4" /><path d="M1 1h14v2H1z" fill="#3a5566" /><path d="M8 15V11a3 3 0 0 1 6 0v4M11 11v4" fill="none" stroke="#2f7fc0" stroke-width="1.500" /></svg></button>
        <button aria-label="实体"><svg width="16" height="16" viewBox="0 0 16 16"><path d="M1.500 4.500l3-3h10v10l-3 3h-10z" fill="#66717f" stroke="#c9d0da" /><path d="M1.500 4.500h10l3-3M11.500 4.500v10" fill="none" stroke="#c9d0da" /></svg></button>
        <button aria-label="缩放"><svg width="16" height="16" viewBox="0 0 16 16"><path d="M1.500 5V1.500H5M1.500 11v3.500H5" fill="none" stroke="#c9d0da" /><circle cx="8" cy="8" r="4.500" fill="none" stroke="#c9d0da" /><path d="M8 6v4M6 8h4" stroke="#c9d0da" /></svg></button>
      </div>
    </footer>
  </div>
</template>

<style>
body {
  margin: 0;
  background: #000;
  overflow: hidden;
}
</style>

<style scoped>
* {
  box-sizing: border-box;
}
.app {
  height: 100vh;
  padding-left: 43px;
  display: flex;
  flex-direction: column;
  overflow: hidden;
  background: #000;
  color: #f3f4f5;
  font: 12px/16px Inter, 'Noto Sans CJK SC', sans-serif;
}
svg {
  display: block;
  flex: none;
}
button,
input,
select {
  font: inherit;
  color: inherit;
  border: 0;
  padding: 0;
  margin: 0;
  background: none;
}
.chev {
  width: 10px;
  height: 10px;
  fill: none;
  stroke: #cfd4da;
  stroke-width: 1.5px;
}

/* Title bar */
.topbar {
  height: 23px;
  flex: none;
  display: flex;
  background: #1c2024;
  white-space: nowrap;
}
.tabs {
  display: flex;
}
.tab {
  min-width: 84px;
  margin-left: -10px;
  padding: 0 26px 0 11px;
  background: #4d5461;
  color: #c5ccd6;
  font-size: 13px;
  clip-path: polygon(8px 0, calc(100% - 17px) 0, 100% 100%, 13px 100%, 0 50%);
}
.tab.first {
  width: 98px;
  margin: 0 -3px 0 0;
  padding: 0 26px 0 0;
  font-size: 12px;
  clip-path: polygon(0 0, calc(100% - 27px) 0, 100% 100%, 0 100%);
}
.tab.on {
  background: #2d3439;
  color: #fff;
}
.space-a {
  flex: 13;
}
.space-b {
  flex: 9;
}
.quick {
  display: flex;
  gap: 13px;
}
.q {
  display: flex;
  align-items: center;
  gap: 6px;
}
.q.new {
  gap: 8px;
}
.help {
  display: flex;
  gap: 11px;
}
.h {
  display: flex;
  align-items: center;
  gap: 7px;
  color: inherit;
  text-decoration: none;
}

/* Ribbon */
.ribbon {
  height: 75px;
  flex: none;
  display: flex;
  background: #2d3439;
  white-space: nowrap;
}
.back {
  width: 27px;
  padding-left: 5px;
  margin-right: 12px;
}
.rgroup {
  display: flex;
}
.rgroup + .rgroup::before {
  content: '';
  width: 2px;
  height: 54px;
  margin: 10px 12px 0;
  background: #66717f;
}
.rbtn {
  min-width: 42px;
  padding: 13px 5px 0;
  display: flex;
  flex-direction: column;
  align-items: center;
}
.ricon {
  position: relative;
}
.ricon svg,
.tools svg {
  fill: none;
  stroke: #c5cfdd;
  overflow: visible;
}
.rlabel {
  margin-top: 2px;
}
.corner {
  position: absolute;
  right: 0;
  bottom: 0;
  width: 4px;
  height: 4px;
  background: #d5dae0;
  clip-path: polygon(100% 0, 100% 100%, 0 100%);
}

.body {
  flex: 1;
  min-height: 0;
  display: flex;
}

/* Project tree */
.left {
  width: 200px;
  flex: none;
  display: flex;
  flex-direction: column;
  border: 1px solid #66717f;
  background: #24292c;
}
.ltools {
  height: 42px;
  flex: none;
  display: flex;
  background: #2d3439;
  border-bottom: 1px solid #66717f;
}
.lt {
  width: 42px;
  display: flex;
  align-items: center;
  justify-content: center;
  border-right: 1px solid #66717f;
}
.treebox {
  flex: 1;
  min-height: 0;
  display: flex;
}
.tree {
  flex: 1;
  min-width: 0;
  margin: 0;
  padding: 0 0 0 1px;
  list-style: none;
  overflow: hidden;
}
.row {
  height: 24px;
  display: flex;
  align-items: center;
  white-space: nowrap;
}
.guide {
  width: 16px;
  height: 24px;
  flex: none;
  display: flex;
  align-items: center;
  justify-content: center;
}
.full,
.branch {
  background: repeating-linear-gradient(#9aa0a6 0 1px, transparent 1px 2px) 8px 0 / 1px 100% no-repeat;
}
.branch {
  background:
    repeating-linear-gradient(#9aa0a6 0 1px, transparent 1px 2px) 8px 0 / 1px 100% no-repeat,
    repeating-linear-gradient(90deg, #9aa0a6 0 1px, transparent 1px 2px) 8px 12px / 8px 1px no-repeat;
}
.branch.end {
  background-size: 1px 12px, 8px 1px;
}
.sel {
  background: #1e5799;
}
.sel .guide {
  background: none;
}
.vicon {
  width: 16px;
  height: 16px;
  margin: 0 3px;
}
.rt {
  margin-left: 3px;
}
.track {
  width: 9px;
  flex: none;
  background: #2d3439;
}
.thumb {
  height: 63%;
  margin: 0 2px 0 1px;
  border-radius: 3px;
  background: #4d5461;
}

/* Work area */
.work {
  flex: 1;
  min-width: 0;
  display: flex;
  flex-direction: column;
  border-top: 1px solid #66717f;
  background: #1a1b1d;
}
.docs {
  height: 27px;
  flex: none;
  display: flex;
  background: #252a2d;
}
.switch {
  width: 30px;
  padding-left: 8px;
  background: #353c43;
}
.doc {
  width: 102px;
  padding-right: 30px;
  display: flex;
  align-items: center;
  justify-content: center;
  background: #353c43;
  color: #878e97;
  border-left: 1px solid #66717f;
  border-bottom: 1px solid #66717f;
}
.doc.on {
  width: 104px;
  padding: 0 8px 0 27px;
  justify-content: space-between;
  background: #66717f;
  color: #fff;
}
.close {
  padding-top: 4px;
}
.rest {
  flex: 1;
  border-bottom: 1px solid #66717f;
}
.stage {
  flex: 1;
  min-height: 0;
  display: flex;
}
.canvas {
  position: relative;
  flex: 1;
  min-width: 0;
}
.plan {
  width: 100%;
  height: 100%;
}
.bubbles circle {
  fill: none;
  stroke: #e6e4e2;
}
.bubbles text {
  fill: #e6e4e2;
  font-size: 8px;
  text-anchor: middle;
}
.mark path {
  fill: #fff;
}
.mark circle {
  fill: #1a1b1d;
  stroke: #fff;
}
.mark text {
  fill: #fff;
  font-size: 14px;
  text-anchor: middle;
}
.handle {
  position: absolute;
  left: 0;
  top: 398px;
  width: 17px;
  height: 32px;
  padding-left: 4px;
  border-radius: 0 16px 16px 0;
  background: #4a4f53;
}

/* Right column */
.right {
  width: 330px;
  flex: none;
  display: flex;
  flex-direction: column;
  gap: 4px;
  padding: 4px 0;
}
.panel {
  background: #2d3439;
  border: 1px solid #66717f;
  border-right: 0;
  height: 154px;
  flex: none;
  padding: 5px 3px 0 8px;
}
h2,
h3 {
  margin: 0;
  font: inherit;
  color: #d9dcdf;
}
.tools {
  margin: 22px 0 0 7px;
  display: grid;
  grid-template-columns: repeat(7, 38px);
  grid-auto-rows: 38px;
}
.tools button {
  display: flex;
  align-items: center;
  justify-content: center;
}
.props {
  flex: 1;
  height: auto;
  min-height: 0;
  overflow: hidden;
}
.type {
  display: flex;
  gap: 2px;
  margin: 5px 1px 8px 3px;
}
.typebox {
  flex: 1;
  height: 50px;
  display: flex;
  align-items: center;
  padding: 0 3px 0 5px;
  border: 1px solid #66717f;
  border-radius: 3px;
  background: #24292c;
}
.typetext {
  flex: 1;
  margin-left: 8px;
  text-align: left;
  line-height: 14px;
  color: #646a70;
}
.typebtns {
  display: flex;
  flex-direction: column;
  gap: 2px;
}
.typebtns button {
  width: 24px;
  height: 24px;
  display: flex;
  align-items: center;
  justify-content: center;
  border: 1px solid #66717f;
  border-radius: 3px;
  background: #24292c;
}
h3 {
  height: 26px;
  display: flex;
  align-items: center;
  gap: 7px;
  padding: 2px 0 0 5px;
}
.sec + .sec {
  margin-top: 11px;
}
.field {
  height: 31px;
  display: flex;
  align-items: center;
  padding-left: 2px;
}
.sec.range {
  margin-top: 12px;
}
.range .field {
  height: 30px;
}
.group .field {
  height: 36px;
}
label {
  width: 84px;
  flex: none;
}
.box,
.sel-wrap {
  flex: 1;
  min-width: 0;
}
.sel-wrap {
  display: grid;
  align-items: center;
}
.sel-wrap > * {
  grid-area: 1 / 1;
}
.sel-wrap .chev {
  justify-self: end;
  margin-right: 3px;
  pointer-events: none;
}
.box,
select {
  height: 24px;
  padding: 0 3px;
  appearance: none;
  border: 1px solid #66717f;
  border-radius: 3px;
  background: #1a1b1d;
}
.plain {
  background: none;
}
input[type='checkbox'] {
  width: 16px;
  height: 16px;
  appearance: none;
  border: 1px solid #66717f;
  border-radius: 2px;
}

/* Status bar */
.status {
  height: 23px;
  flex: none;
  display: flex;
  background: #2d3439;
  overflow: hidden;
}
.sgroup {
  display: flex;
  align-items: center;
  justify-content: center;
}
.a {
  width: 120px;
  gap: 16px;
  border-right: 2px solid #66717f;
}
.b {
  width: 40px;
  margin-left: auto;
  border-left: 2px solid #66717f;
}
.c {
  width: 129px;
  padding-left: 7px;
  gap: 12px;
  justify-content: flex-start;
  border-left: 2px solid #66717f;
}
</style>
